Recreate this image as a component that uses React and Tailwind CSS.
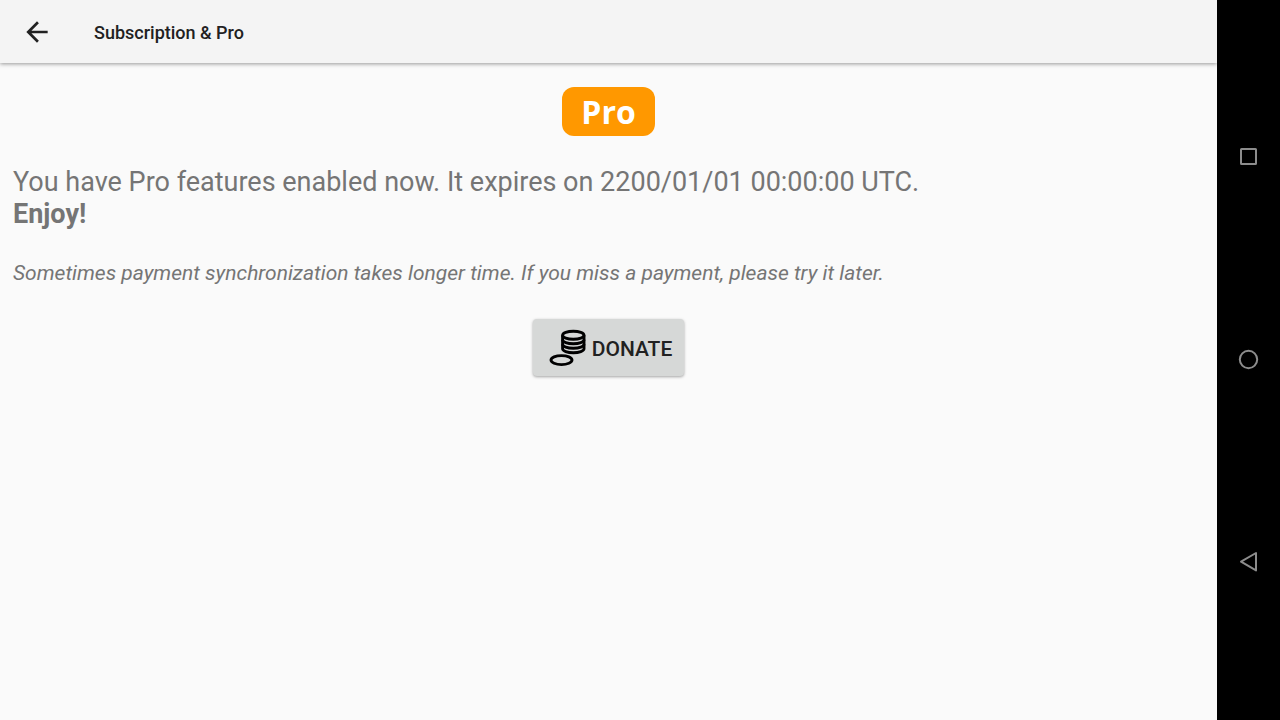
const NAV_KEYS = [
  { id: 'recents', label: 'Recent apps', shape: <rect x="4" y="4" width="15" height="15" rx="0.5" /> },
  { id: 'home', label: 'Home', shape: <circle cx="11.5" cy="11.5" r="8.7" /> },
  { id: 'back', label: 'Back', shape: <path d="M19 2v17.4L4 10.7Z" /> },
];

function BackArrow() {
  return (
    <svg viewBox="0 0 24 24" className="h-8 w-8" fill="#212121" aria-hidden="true">
      <path d="M20 11H7.83l5.59-5.59L12 4l-8 8 8 8 1.41-1.41L7.83 13H20v-2z" />
    </svg>
  );
}

function CoinsIcon() {
  return (
    <svg viewBox="0 0 45 45" className="h-[45px] w-[45px]" fill="none" stroke="#000" strokeWidth="2.9" aria-hidden="true">
      <ellipse cx="28.3" cy="10.2" rx="10.7" ry="4" />
      <path d="M17.6 10.2v13.5c0 2.2 4.8 4 10.7 4s10.7-1.8 10.7-4V10.2" />
      <path d="M17.6 14.7c0 2.2 4.8 4 10.7 4s10.7-1.8 10.7-4" />
      <path d="M17.6 19.2c0 2.2 4.8 4 10.7 4s10.7-1.8 10.7-4" />
      <ellipse cx="16.5" cy="35.1" rx="10.5" ry="4.5" />
    </svg>
  );
}

function TopBar({ title }) {
  return (
    <header className="z-10 flex h-[63px] shrink-0 items-center bg-[#f4f4f4] px-[21px] shadow-[0_1px_4px_rgba(0,0,0,0.4)]">
      <button type="button" aria-label="Navigate up">
        <BackArrow />
      </button>
      <h1 className="ml-[41px] pt-0.5 text-[18px] leading-6 font-medium text-[#212121]">{title}</h1>
    </header>
  );
}

function NavBar() {
  return (
    <nav className="flex w-[63px] shrink-0 flex-col items-center justify-center gap-[180px] bg-black pb-px">
      {NAV_KEYS.map(({ id, label, shape }) => (
        <button key={id} type="button" aria-label={label}>
          <svg
            viewBox="0 0 23 23"
            className="h-[23px] w-[23px]"
            fill="none"
            stroke="#8c8c8c"
            strokeWidth="2"
            strokeLinejoin="round"
          >
            {shape}
          </svg>
        </button>
      ))}
    </nav>
  );
}

export default function App() {
  return (
    <div className="flex min-h-screen bg-[#fafafa] font-[Roboto,sans-serif] text-[#757575]">
      <div className="flex min-w-0 flex-1 flex-col">
        <TopBar title="Subscription & Pro" />

        <main className="flex flex-col px-[13px] pt-6">
          <span className="self-center rounded-xl bg-[#ff9800] px-[19px] font-['Open_Sans',sans-serif] text-[32px] leading-[49px] font-bold text-white">
            Pro
          </span>

          <p className="mt-[30px] text-[27px] leading-8">
            You have Pro features enabled now. It expires on 2200/01/01 00:00:00 UTC.
            <br />
            <b>Enjoy!</b>
          </p>

          <p className="mt-[31px] text-[21px] leading-6 italic">
            Sometimes payment synchronization takes longer time. If you miss a payment, please try it later.
          </p>

          <button
            type="button"
            className="mt-[34px] flex items-center gap-0.5 self-center rounded-sm bg-[#d6d8d7] px-3 py-[6px] text-[21px] leading-6 font-medium text-[#212121] shadow-[0_1px_3px_rgba(0,0,0,0.35)]"
          >
            <CoinsIcon />
            <span className="pt-0.5">DONATE</span>
          </button>
        </main>
      </div>

      <NavBar />
    </div>
  );
}
